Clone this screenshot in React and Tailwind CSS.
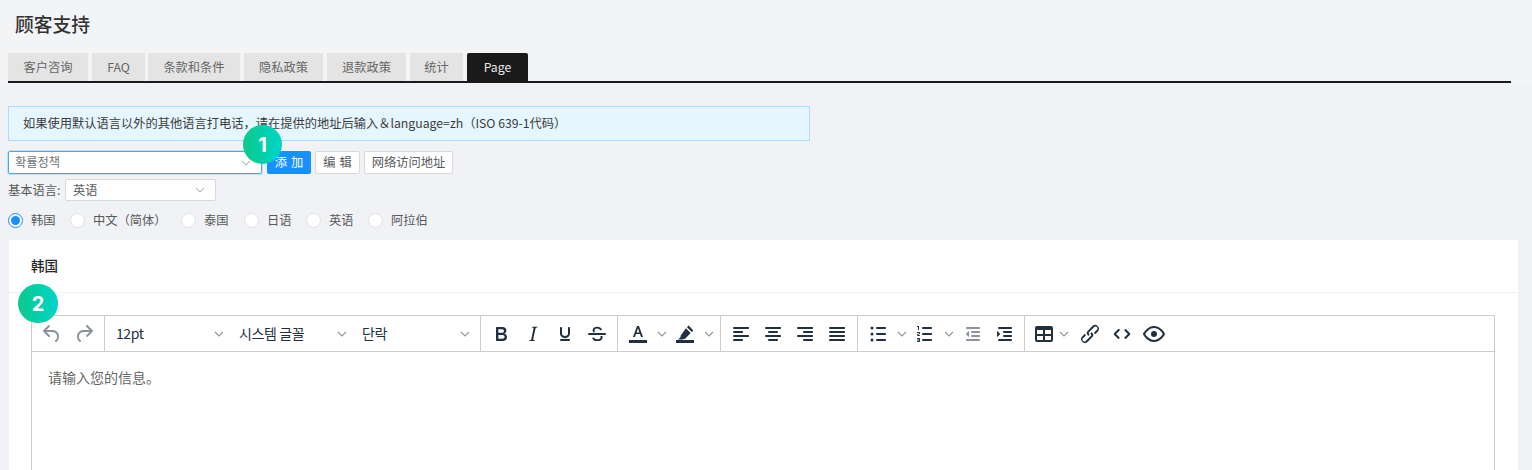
import React from 'react'

const tabs = ['客户咨询', 'FAQ', '条款和条件', '隐私政策', '退款政策', '统计']
const tabWidths = ['w-[80px]', 'w-[53px]', 'w-[92px]', 'w-[79px]', 'w-[79px]', 'w-[53px]']
const languages = [
  { label: '韩国', checked: true, width: 'w-[62px]' },
  { label: '中文（简体）', width: 'w-[111px]' },
  { label: '泰国', width: 'w-[63px]' },
  { label: '日语', width: 'w-[62px]' },
  { label: '英语', width: 'w-[62px]' },
  { label: '阿拉伯', width: 'w-[74px]' },
]

const Icon = ({ d, className = '', fill = '#222f3e' }) => (
  <svg viewBox="0 0 24 24" className={`w-6 h-6 ${className}`}>
    <path d={d} fill={fill} fillRule="evenodd" />
  </svg>
)

const Chevron = ({ className = 'w-[10px] h-[6px]', color = '#8f959e' }) => (
  <svg viewBox="0 0 10 6" className={className} fill="none" stroke={color} strokeWidth="1.1">
    <path d="M1 1l4 4 4-4" />
  </svg>
)

const IconButton = ({ d, fill, className = 'w-8' }) => (
  <div className={`${className} h-[35px] flex items-center justify-center`}>
    <Icon d={d} fill={fill} />
  </div>
)

const SplitChevron = ({ className = 'w-[15px] justify-center' }) => (
  <div className={`${className} h-[35px] flex items-center`}>
    <Chevron />
  </div>
)

const FormatSelect = ({ label }) => (
  <div className="w-[123px] h-[35px] pl-[9px] pr-[6px] flex items-center justify-between text-[14px] text-[#222f3e]">
    <span className="tracking-[-0.4px]">{label}</span>
    <Chevron />
  </div>
)

const Group = ({ children, className = '' }) => (
  <div className={`flex items-center px-1 border-r border-[#cccccc] ${className}`}>{children}</div>
)

const Badge = ({ n, className }) => (
  <div className={`absolute rounded-full h-[39px] flex items-center justify-center bg-gradient-to-r from-[#0ec98b] to-[#00d5c8] text-white font-bold text-[20px] font-['Inter',sans-serif] ${className}`}>
    {n}
  </div>
)

const icons = {
  undo: 'M6.4 8H12c3.7 0 6.2 2 6.8 5.1.6 2.7-.4 5.6-2.3 6.8a1 1 0 0 1-1-1.8c1.1-.6 1.8-2.7 1.4-4.6-.5-2.1-2.1-3.5-4.9-3.5H6.4l3.3 3.3a1 1 0 1 1-1.4 1.4l-5-5a1 1 0 0 1 0-1.4l5-5a1 1 0 0 1 1.4 1.4L6.4 8z',
  redo: 'M17.6 10H12c-2.8 0-4.4 1.4-4.9 3.5-.4 2 .3 4 1.4 4.6a1 1 0 1 1-1 1.8c-2-1.2-2.9-4.1-2.3-6.8.6-3 3-5.1 6.8-5.1h5.6l-3.3-3.3a1 1 0 1 1 1.4-1.4l5 5a1 1 0 0 1 0 1.4l-5 5a1 1 0 0 1-1.4-1.4l3.3-3.3z',
  bold: 'M7.8 19c-.3 0-.5 0-.6-.2l-.2-.5V5.7c0-.2 0-.4.2-.5l.6-.2h5c1.5 0 2.7.3 3.5 1 .7.6 1.1 1.4 1.1 2.5a3 3 0 0 1-.6 1.9c-.4.6-1 1-1.6 1.2.4.1.9.3 1.3.6s.8.7 1 1.2c.4.4.5 1 .5 1.6 0 1.3-.4 2.3-1.3 3-.8.7-2.1 1-3.8 1H7.8zm5-8.3c.6 0 1.2-.1 1.6-.5.4-.3.6-.7.6-1.3 0-1.1-.8-1.7-2.3-1.7H9.3v3.5h3.4zm.5 6c.7 0 1.3-.1 1.7-.4.4-.4.6-.9.6-1.5s-.2-1-.7-1.4c-.4-.3-1-.4-2-.4H9.4v3.8h4z',
  italic: 'M16.7 4.7l-.1.9h-.3c-.6 0-1 0-1.4.3-.3.3-.4.6-.5 1.1l-2.1 9.8v.6c0 .5.4.8 1.4.8h.2l-.2.8H8l.2-.8h.2c1.1 0 1.8-.5 2-1.5l2-9.8.1-.5c0-.6-.4-.8-1.4-.8h-.3l.2-.9h5.8z',
  underline: 'M16 5c.6 0 1 .4 1 1v5.5a4 4 0 0 1-.4 1.8l-1 1.4a5.3 5.3 0 0 1-5.5 1 5 5 0 0 1-1.6-1c-.5-.4-.8-.9-1.1-1.4a4 4 0 0 1-.4-1.8V6c0-.6.4-1 1-1s1 .4 1 1v5.5c0 .3 0 .6.2 1l.6.7a3.3 3.3 0 0 0 2.2.8 3.4 3.4 0 0 0 2.2-.8c.3-.2.4-.5.6-.8l.2-.9V6c0-.6.4-1 1-1zM8 17h8c.6 0 1 .4 1 1s-.4 1-1 1H8a1 1 0 0 1 0-2z',
  strike: 'M4 11h16a1 1 0 0 1 0 2H4a1 1 0 0 1 0-2zm11.6-2.5c-.5-.7-1-1.1-1.3-1.3-.6-.4-1.3-.6-2-.6-2.7 0-2.8 1.7-2.8 2.1 0 .8.4 1.3 1 1.6H8.3c-.4-.5-.7-1-.7-1.7 0-2.2 1.6-3.9 4.7-3.9 1 0 2 .3 2.9.8.5.3 1.2.9 1.9 1.8l-1.5 1.2zM7 16.4l1.5-1.1c.4.6 1.6 2 3.7 2 1.6 0 2.5-.4 3-1 .3-.4.4-.8.4-1.3 0-.4-.1-.7-.3-1h2.1c.1.3.2.7.2 1 0 1.4-.7 4.1-5 4.1A6.2 6.2 0 0 1 7 16.4z',
  textColor: 'M3 18h18v3H3v-3zM11 4h2l4 11h-2l-1-3h-4l-1 3H7l4-11zm-.4 6.4h2.8L12 6.3l-1.4 4.1z',
  highlight: 'M3 18h18v3H3v-3zm12.6-14.4l4.8 4.8-1.6 1.6-4.8-4.8 1.6-1.6zM12.9 6.3l4.8 4.8-5.6 5.6c-.4.4-1 .4-1.4.1l-.9.8H5l2.7-2.7c-.4-.4-.3-1 .1-1.4l5.1-7.2z',
  alignLeft: 'M5 5h14c.6 0 1 .4 1 1s-.4 1-1 1H5a1 1 0 1 1 0-2zm0 4h8c.6 0 1 .4 1 1s-.4 1-1 1H5a1 1 0 1 1 0-2zm0 8h8c.6 0 1 .4 1 1s-.4 1-1 1H5a1 1 0 0 1 0-2zm0-4h14c.6 0 1 .4 1 1s-.4 1-1 1H5a1 1 0 0 1 0-2z',
  alignCenter: 'M5 5h14c.6 0 1 .4 1 1s-.4 1-1 1H5a1 1 0 1 1 0-2zm3 4h8c.6 0 1 .4 1 1s-.4 1-1 1H8a1 1 0 1 1 0-2zm0 8h8c.6 0 1 .4 1 1s-.4 1-1 1H8a1 1 0 0 1 0-2zm-3-4h14c.6 0 1 .4 1 1s-.4 1-1 1H5a1 1 0 0 1 0-2z',
  alignRight: 'M5 5h14c.6 0 1 .4 1 1s-.4 1-1 1H5a1 1 0 1 1 0-2zm6 4h8c.6 0 1 .4 1 1s-.4 1-1 1h-8a1 1 0 0 1 0-2zm0 8h8c.6 0 1 .4 1 1s-.4 1-1 1h-8a1 1 0 0 1 0-2zm-6-4h14c.6 0 1 .4 1 1s-.4 1-1 1H5a1 1 0 0 1 0-2z',
  justify: 'M5 5h14c.6 0 1 .4 1 1s-.4 1-1 1H5a1 1 0 1 1 0-2zm0 4h14c.6 0 1 .4 1 1s-.4 1-1 1H5a1 1 0 1 1 0-2zm0 4h14c.6 0 1 .4 1 1s-.4 1-1 1H5a1 1 0 0 1 0-2zm0 4h14c.6 0 1 .4 1 1s-.4 1-1 1H5a1 1 0 0 1 0-2z',
  bullets: 'M11 5h8c.6 0 1 .4 1 1s-.4 1-1 1h-8a1 1 0 0 1 0-2zm0 6h8c.6 0 1 .4 1 1s-.4 1-1 1h-8a1 1 0 0 1 0-2zm0 6h8c.6 0 1 .4 1 1s-.4 1-1 1h-8a1 1 0 0 1 0-2zM4.500 6a1.500 1.500 0 1 1 3 0 1.500 1.500 0 0 1-3 0zm0 6a1.500 1.500 0 1 1 3 0 1.500 1.500 0 0 1-3 0zm0 6a1.500 1.500 0 1 1 3 0 1.500 1.500 0 0 1-3 0z',
  numbers: 'M10 17h8c.6 0 1 .4 1 1s-.4 1-1 1h-8a1 1 0 0 1 0-2zm0-6h8c.6 0 1 .4 1 1s-.4 1-1 1h-8a1 1 0 0 1 0-2zm0-6h8c.6 0 1 .4 1 1s-.4 1-1 1h-8a1 1 0 1 1 0-2zM6 4v3.500c0 .3-.2.5-.5.5a.5.5 0 0 1-.5-.5V5h-.5a.5.5 0 0 1 0-1H6zm-1 8.800l.2.2h1.300c.3 0 .5.2.5.5s-.2.5-.5.5H4.900a1 1 0 0 1-.9-1V13c0-.4.3-.8.6-1l1.200-.4.2-.3a.2.2 0 0 0-.2-.2H4.500a.5.5 0 0 1-.5-.5c0-.3.2-.5.5-.5h1.600c.5 0 .9.4.9 1v.1c0 .4-.3.8-.6 1l-1.200.4-.2.3zM7 17v2c0 .6-.4 1-1 1H4.500a.5.5 0 0 1 0-1h1.200c.2 0 .3-.1.3-.3 0-.2-.1-.3-.3-.3H4.400a.4.4 0 1 1 0-.8h1.300c.2 0 .3-.1.3-.3 0-.2-.1-.3-.3-.3H4.500a.5.5 0 1 1 0-1H6c.6 0 1 .4 1 1z',
  outdent: 'M7 5h12c.6 0 1 .4 1 1s-.4 1-1 1H7a1 1 0 1 1 0-2zm5 4h7c.6 0 1 .4 1 1s-.4 1-1 1h-7a1 1 0 0 1 0-2zm0 4h7c.6 0 1 .4 1 1s-.4 1-1 1h-7a1 1 0 0 1 0-2zm-5 4h12a1 1 0 0 1 0 2H7a1 1 0 0 1 0-2zm1.400-2.300l-2.400-2.400a.5.5 0 0 1 0-.6l2.400-2.400c.3-.3.6-.1.6.3v4.800c0 .4-.3.6-.6.3z',
  indent: 'M7 5h12c.6 0 1 .4 1 1s-.4 1-1 1H7a1 1 0 1 1 0-2zm5 4h7c.6 0 1 .4 1 1s-.4 1-1 1h-7a1 1 0 0 1 0-2zm0 4h7c.6 0 1 .4 1 1s-.4 1-1 1h-7a1 1 0 0 1 0-2zm-5 4h12a1 1 0 0 1 0 2H7a1 1 0 0 1 0-2zm-1.400-2.300l2.400-2.400a.5.5 0 0 0 0-.6L5.600 9.300c-.3-.3-.6-.1-.6.3v4.800c0 .4.3.6.6.3z',
  table: 'M19 4a2 2 0 0 1 2 2v12a2 2 0 0 1-2 2H5a2 2 0 0 1-2-2V6c0-1.100.9-2 2-2h14zM5 14v4h6v-4H5zm14 0h-6v4h6v-4zm0-6h-6v4h6V8zM5 12h6V8H5v4z',
  link: 'M6.200 12.300a1 1 0 0 1 1.400 1.400l-2 2a2 2 0 1 0 2.600 2.800l4.800-4.800a1 1 0 0 0 0-1.400 1 1 0 1 1 1.400-1.300 2.900 2.900 0 0 1 0 4L9.600 20a3.900 3.900 0 0 1-5.500-5.500l2-2zm11.600-.6a1 1 0 0 1-1.400-1.400l2-2a2 2 0 1 0-2.600-2.800L11 10.300a1 1 0 0 0 0 1.400 1 1 0 1 1-1.400 1.300 2.900 2.900 0 0 1 0-4L14.400 4a3.900 3.900 0 0 1 5.500 5.500l-2 2z',
  code: 'M9.400 8.700L6.100 12l3.300 3.300a1 1 0 0 1-1.400 1.400l-4-4a1 1 0 0 1 0-1.400l4-4a1 1 0 1 1 1.400 1.400zm5.200 0a1 1 0 0 1 1.400-1.400l4 4a1 1 0 0 1 0 1.400l-4 4a1 1 0 0 1-1.400-1.400l3.300-3.300-3.300-3.300z',
  eye: 'M3.500 12.500c.5.8 1.100 1.600 1.800 2.300 2 2 4.200 3.200 6.700 3.200s4.700-1.200 6.700-3.200a16.200 16.200 0 0 0 2.100-2.800 15.700 15.700 0 0 0-2.100-2.800c-2-2-4.200-3.200-6.700-3.200a9.300 9.300 0 0 0-6.700 3.200A16.200 16.200 0 0 0 3.200 12c0 .2.200.3.300.5zm-2.400-1l.7-1.200L4 7.800C6.200 5.400 8.900 4 12 4c3 0 5.800 1.400 8.100 3.800a18.200 18.200 0 0 1 2.800 3.700v1l-.7 1.200-2.100 2.500c-2.300 2.400-5 3.800-8.100 3.800a11.300 11.300 0 0 1-8.100-3.800 18.200 18.200 0 0 1-2.800-3.700 1 1 0 0 1 0-1zM12 15a3 3 0 1 1 0-6 3 3 0 0 1 0 6z',
}

const App = () => {
  return (
    <div className="relative w-[1532px] h-[470px] overflow-hidden bg-[#f0f2f5] font-['Noto_Sans_CJK_SC','Noto_Sans',sans-serif] text-[12.25px] text-[#595959]">
      <div className="h-[83px] ml-px mt-px bg-[#f3f4f6] pl-[7px] pr-[21px]">
        <div className="h-[52px] pl-[7px] pt-[10px] text-[18.8px] leading-[26px] font-medium text-[#333333]">顾客支持</div>
        <div className="flex border-b-2 border-[#1a1a1a] h-[30px]">
          {tabs.map((tab, i) => (
            <div key={tab} className={`${tabWidths[i]} mr-1 last:mr-[3px] [&:nth-child(2)]:mr-[3px] h-[28px] bg-[#e4e4e4] flex items-center justify-center text-[#666666]`}>{tab}</div>
          ))}
          <div className="w-[61px] h-[28px] bg-[#1a1a1a] rounded-t-[2px] flex items-center justify-center text-[#e8e8e8]">Page</div>
        </div>
      </div>

      <div className="pl-2">
        <div className="mt-[22px] w-[802px] h-[35px] border border-[#a8ddfb] bg-[#e6f6fe] pl-[14px] flex items-center text-[#3b3b3b]">
          如果使用默认语言以外的其他语言打电话，请在提供的地址后输入＆language=zh（ISO 639-1代码）
        </div>

        <div className="mt-[10px] flex items-center h-[23px]">
          <div className="w-[254px] h-[23px] bg-white border border-[#40a9ff] rounded-[2px] shadow-[0_0_0_1px_rgba(24,144,255,0.2)] pl-[6px] pr-[10px] flex items-center justify-between text-[#737373]">
            <span>확률정책</span>
            <Chevron color="#bfbfbf" />
          </div>
          <div className="ml-[5px] w-[44px] h-[23px] rounded-[2px] bg-[#1890ff] text-white flex items-center justify-center [word-spacing:1.5px]">添 加</div>
          <div className="ml-1 w-[45px] h-[23px] rounded-[2px] bg-white border border-[#d9d9d9] flex items-center justify-center [word-spacing:1.5px]">编 辑</div>
          <div className="ml-1 w-[89px] h-[23px] rounded-[2px] bg-white border border-[#d9d9d9] flex items-center justify-center">网络访问地址</div>
        </div>

        <div className="mt-[5px] flex items-center h-[22px]">
          <span className="w-[57px]">基本语言:</span>
          <div className="w-[151px] h-[22px] bg-white border border-[#d9d9d9] rounded-[2px] pl-[7px] pr-[10px] flex items-center justify-between">
            <span>英语</span>
            <Chevron color="#bfbfbf" />
          </div>
        </div>

        <div className="mt-[11px] h-[16px] flex items-center">
          {languages.map((lang) => (
            <div key={lang.label} className={`flex items-center ${lang.width}`}>
              <span className={`w-[15px] h-[15px] rounded-full bg-white border flex items-center justify-center ${lang.checked ? 'border-[#1890ff]' : 'border-[#e0e0e0]'}`}>
                {lang.checked && <span className="w-[9px] h-[9px] rounded-full bg-[#1890ff]" />}
              </span>
              <span className="ml-2">{lang.label}</span>
            </div>
          ))}
        </div>

        <div className="mt-[12px] ml-px w-[1509px] h-[240px] bg-white">
          <div className="h-[53px] border-b border-[#f0f0f0] pl-[22px] pb-[2px] flex items-center text-[13.5px] font-medium text-[#262626]">韩国</div>
          <div className="mt-[22px] ml-[22px] mr-[23px] h-[200px] border border-[#cccccc]">
            <div className="flex h-[36px] border-b border-[#cccccc]">
              <Group>
                <IconButton d={icons.undo} fill="#8d939b" />
                <IconButton d={icons.redo} fill="#8d939b" />
              </Group>
              <Group className="pl-[2px]">
                <FormatSelect label="12pt" />
                <FormatSelect label="시스템 글꼴" />
                <FormatSelect label="단락" />
              </Group>
              <Group>
                <IconButton d={icons.bold} />
                <IconButton d={icons.italic} />
                <IconButton d={icons.underline} />
                <IconButton d={icons.strike} />
              </Group>
              <Group>
                <IconButton d={icons.textColor} />
                <SplitChevron />
                <IconButton d={icons.highlight} />
                <SplitChevron />
              </Group>
              <Group>
                <IconButton d={icons.alignLeft} />
                <IconButton d={icons.alignCenter} />
                <IconButton d={icons.alignRight} />
                <IconButton d={icons.justify} />
              </Group>
              <Group>
                <IconButton d={icons.bullets} />
                <SplitChevron />
                <IconButton d={icons.numbers} />
                <SplitChevron />
                <IconButton d={icons.outdent} fill="#8d939b" />
                <IconButton d={icons.indent} />
              </Group>
              <div className="flex items-center px-1">
                <IconButton d={icons.table} className="w-[30px]" />
                <SplitChevron className="w-[15px]" />
                <IconButton d={icons.link} />
                <IconButton d={icons.code} />
                <IconButton d={icons.eye} />
              </div>
            </div>
            <div className="pl-[16px] pt-[15px] text-[14px] leading-[20px] text-[#666666]">请输入您的信息。</div>
          </div>
        </div>
      </div>

      <Badge n="1" className="left-[243px] top-[125px] w-[39px]" />
      <Badge n="2" className="left-[18px] top-[284px] w-[40px]" />
    </div>
  )
}

export default App
